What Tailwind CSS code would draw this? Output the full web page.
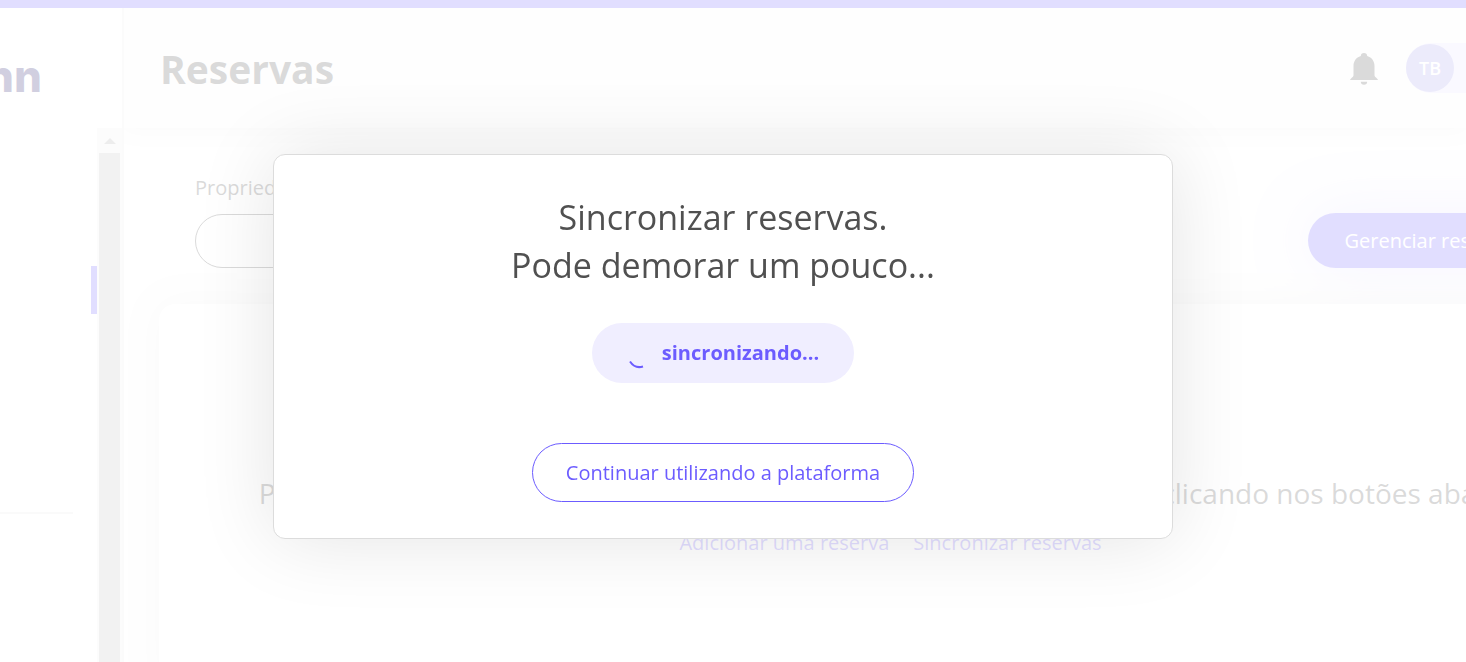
<!DOCTYPE html>
<html lang="pt-BR">
  <head>
    <meta charset="UTF-8" />
    <meta name="viewport" content="width=device-width, initial-scale=1.0" />
    <title>Reservas</title>
    <script src="https://cdn.jsdelivr.net/npm/@tailwindcss/browser@4"></script>
  </head>

  <body
    class="h-screen overflow-hidden bg-white text-[#484848] font-['Open_Sans','Noto_Sans',sans-serif] flex flex-col"
  >
    <div class="h-2 shrink-0 bg-[#6c5cff]"></div>

    <div class="flex flex-1 min-h-0">
      <!-- sidebar -->
      <aside class="w-[124px] shrink-0 flex flex-col border-r-2 border-[#ebebeb]">
        <div class="h-30 shrink-0 flex items-center pt-4">
          <div
            class="w-[42px] flex justify-end overflow-hidden font-['Inter',sans-serif] text-[44px] leading-none font-extrabold text-[#190f64]"
          >
            nn
          </div>
        </div>
        <div class="flex flex-1 min-h-0">
          <nav class="flex-1 flex flex-col pt-[138px]">
            <a href="#" aria-label="Reservas" class="block h-12 border-r-6 border-[#6c5cff]"></a>
            <hr class="mt-[198px] mr-6 border-t-2 border-[#e6e6e6]" />
          </nav>
          <div class="w-[25px] shrink-0 flex flex-col items-center bg-[#f0f0f0]">
            <svg class="h-[25px] w-3 shrink-0" viewBox="0 0 12 25" fill="#a6a6a6">
              <path d="M0 16 L6 10 L12 16 Z" />
            </svg>
            <div class="w-[21px] flex-1 bg-[#bebebe]"></div>
          </div>
        </div>
      </aside>

      <div class="flex-1 min-w-0 flex flex-col overflow-hidden bg-[#fcfcfc]">
        <header
          class="relative h-30 shrink-0 flex items-center justify-between pl-9 bg-[#fafafa] shadow-[0_0_20px_rgba(0,0,0,0.1)]"
        >
          <h1 class="text-[39px] leading-none font-bold">Reservas</h1>
          <div class="flex items-center gap-7">
            <button type="button" aria-label="Notificações" class="pt-0.5">
              <svg class="h-8 w-7" viewBox="0 0 28 32" fill="#484848">
                <path
                  d="M14 0 C12 0 10.800 1.300 10.800 3.100 C6 4.500 3.500 8.500 3.500 13 V22.500 C3.500 24 0 25.500 0 27 H28 C28 25.500 24.500 24 24.500 22.500 V13 C24.500 8.500 22 4.500 17.200 3.100 C17.200 1.300 16 0 14 0 Z"
                />
                <path d="M10.800 28.700 H17.200 C17.200 30.500 16 31.800 14 31.800 C12 31.800 10.800 30.500 10.800 28.700 Z" />
              </svg>
            </button>
            <div class="w-15 h-[50px] flex items-center rounded-l-full bg-[#e6e1ff]">
              <span
                class="size-12 rounded-full bg-[#a09beb] text-white text-lg font-semibold flex items-center justify-center"
                >TB</span
              >
            </div>
          </div>
        </header>

        <main class="flex-1 min-h-0 flex flex-col pl-[35px]">
          <div class="flex items-start justify-between pl-9 pt-12">
            <div class="flex flex-col gap-3.5">
              <label for="propriedade" class="text-xl leading-6">Propriedade</label>
              <select
                id="propriedade"
                class="w-80 h-[54px] px-6 appearance-none rounded-full border border-[#484848] bg-white text-xl"
              >
                <option></option>
              </select>
            </div>
            <button
              type="button"
              class="mt-[37px] -mr-[90px] h-[55px] px-9 rounded-full bg-[#6c5cff] text-white text-xl whitespace-nowrap shadow-[0_0_60px_rgba(108,92,255,0.3)]"
            >
              Gerenciar reservas
            </button>
          </div>

          <section
            class="relative mt-9 -mr-[156px] -mb-6 flex-1 rounded-2xl bg-white pt-[167px] text-center shadow-[0_0_36px_rgba(0,0,0,0.1)]"
          >
            <p class="text-[28px] leading-11 whitespace-nowrap">
              Para começar, adicione manualmente ou sincronize as suas reservas clicando nos botões abaixo:
            </p>
            <div class="mt-3.5 flex justify-center gap-6 text-xl leading-7 text-[#6c5cff]">
              <a href="#">Adicionar uma reserva</a>
              <a href="#">Sincronizar reservas</a>
            </div>
          </section>
        </main>
      </div>
    </div>

    <!-- modal -->
    <div class="fixed inset-0 flex items-start justify-center bg-white/80 pt-[154px] pr-5">
      <div
        role="dialog"
        aria-labelledby="sync-title"
        class="w-full max-w-[900px] flex flex-col items-center rounded-xl border border-[#dcdcdc] bg-white pt-[38px] pb-9 text-center shadow-[0_0_80px_rgba(0,0,0,0.11)]"
      >
        <h2 id="sync-title" class="text-[34px] leading-12 text-[#505050]">
          Sincronizar reservas.<br />Pode demorar um pouco...
        </h2>
        <button
          type="button"
          class="mt-[34px] h-15 px-[35px] flex items-center gap-[11px] rounded-full bg-[#f0eeff] text-[#6c5cff] text-xl font-bold"
        >
          <svg class="w-6 h-8" viewBox="0 0 24 32" fill="none">
            <path d="M3 24.500 Q8 32 16 29.500" stroke="currentColor" stroke-width="2" />
          </svg>
          sincronizando...
        </button>
        <button
          type="button"
          class="mt-15 h-[59px] px-[33px] rounded-full border border-[#6c5cff] text-[#6c5cff] text-xl"
        >
          Continuar utilizando a plataforma
        </button>
      </div>
    </div>
  </body>
</html>
